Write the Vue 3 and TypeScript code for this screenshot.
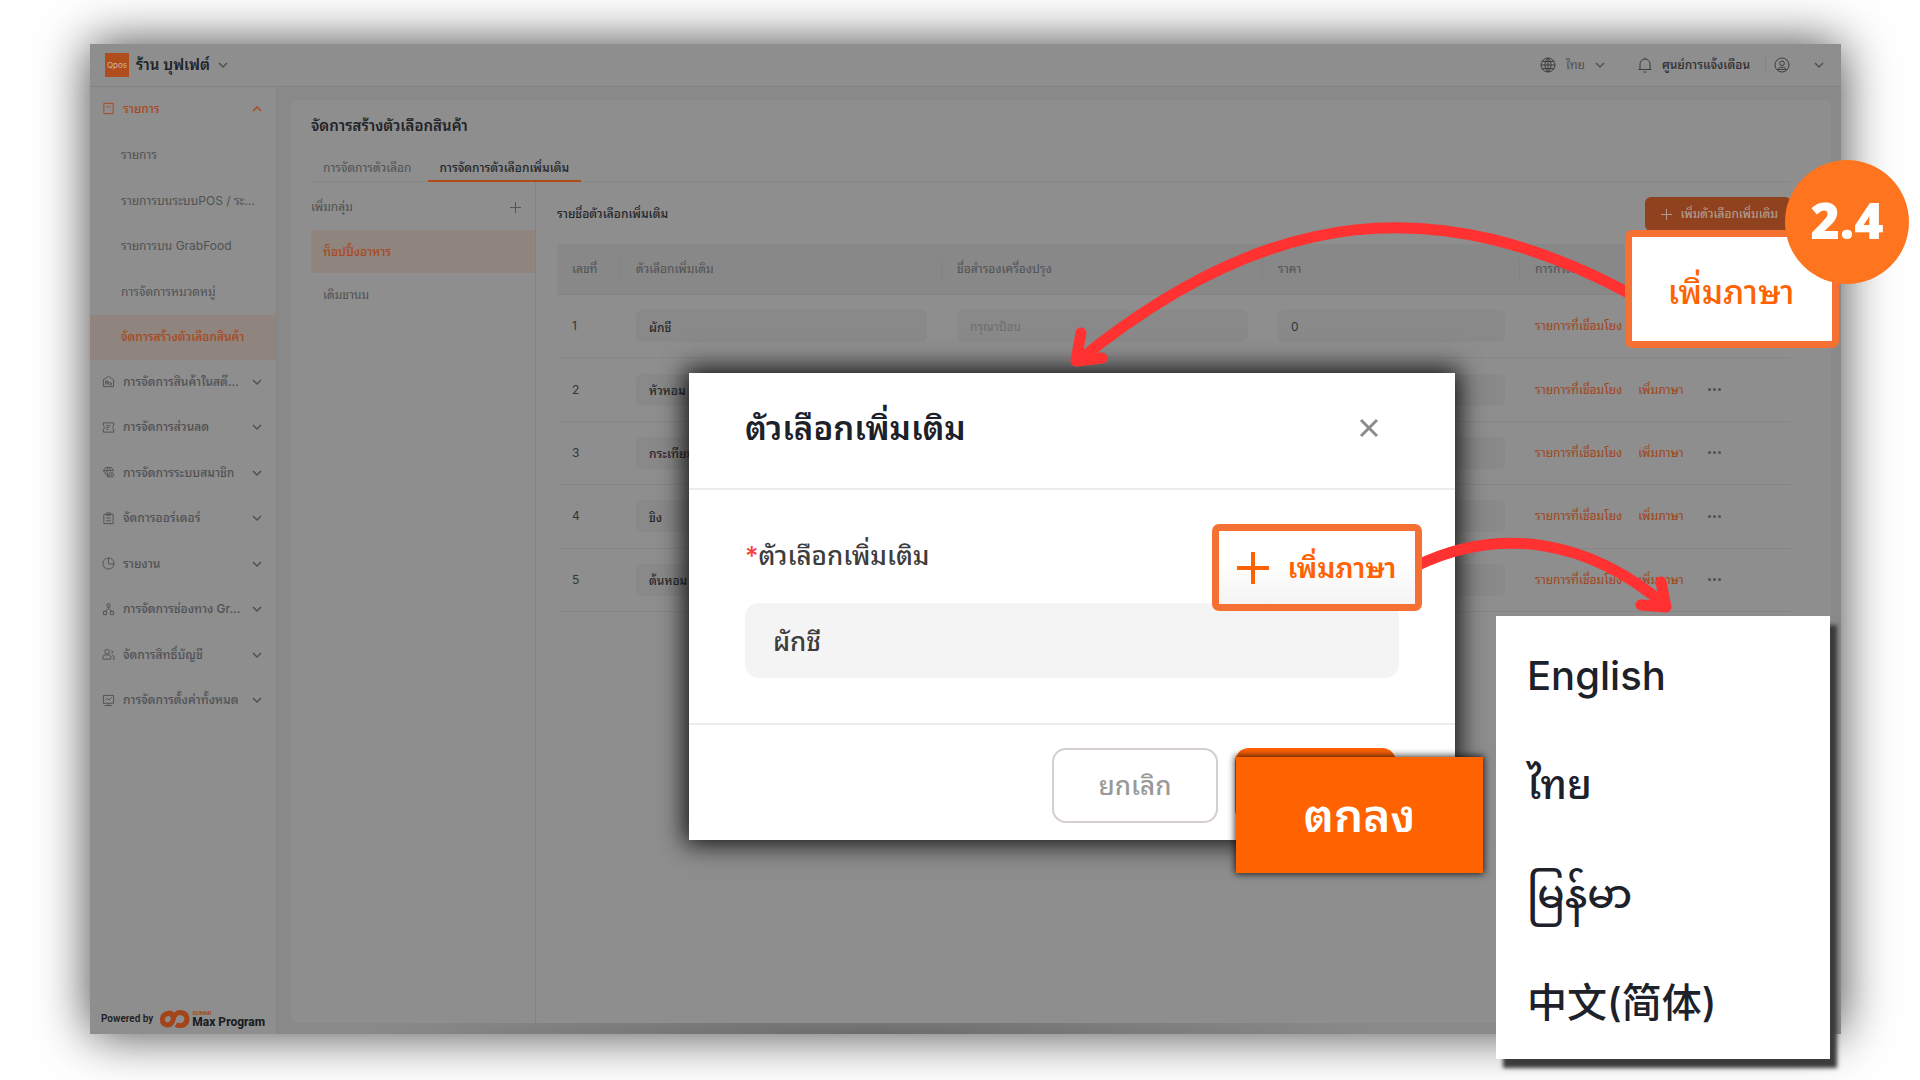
<script setup lang="ts">
import { ref } from 'vue'

interface MenuItem {
  label: string
  icon?: string
  kind: 'group' | 'child'
  open?: boolean
  active?: boolean
}

interface Topping {
  id: number
  name: string
  alias: string
  price: string
}

const menu: MenuItem[] = [
  { label: 'รายการ', icon: 'bag', kind: 'group', open: true },
  { label: 'รายการ', kind: 'child' },
  { label: 'รายการบนระบบPOS / ระ...', kind: 'child' },
  { label: 'รายการบน GrabFood', kind: 'child' },
  { label: 'การจัดการหมวดหมู่', kind: 'child' },
  { label: 'จัดการสร้างตัวเลือกสินค้า', kind: 'child', active: true },
  { label: 'การจัดการสินค้าในสต๊...', icon: 'stock', kind: 'group' },
  { label: 'การจัดการส่วนลด', icon: 'coupon', kind: 'group' },
  { label: 'การจัดการระบบสมาชิก', icon: 'member', kind: 'group' },
  { label: 'จัดการออร์เดอร์', icon: 'order', kind: 'group' },
  { label: 'รายงาน', icon: 'report', kind: 'group' },
  { label: 'การจัดการช่องทาง Gr...', icon: 'channel', kind: 'group' },
  { label: 'จัดการสิทธิ์บัญชี', icon: 'account', kind: 'group' },
  { label: 'การจัดการตั้งค่าทั้งหมด', icon: 'settings', kind: 'group' },
]

const icons: Record<string, string> = {
  bag: 'M2 1.5h10v11H2zM5 4c0 2.4 4 2.4 4 0',
  stock: 'M1.5 12.5V5L7 1.5 12.5 5v7.5zM4 10.5V6.5h2.5v4M4 8.5h6M8 10.5h2v-2',
  coupon: 'M1.5 2h11v3c-1.3 0-1.3 4 0 4v3h-11V9c1.3 0 1.3-4 0-4zM4.5 5h4.5M4.5 7h3M4.5 9h2',
  member: 'M7 12.5 1.5 5 4 1.5h6L12.5 5M1.5 5h11M5 5l2 7M5 5l1.5-3.5M9 5 8 1.5M10 7a2.5 2.5 0 1 1 0 5 2.5 2.5 0 0 1 0-5M10 8.5V10h1',
  order: 'M2 2.5h10v10H2zM5 1h4v2.5H5zM4.5 6.5h5M4.5 9.5h5',
  report: 'M7 1a6 6 0 1 1 0 12A6 6 0 0 1 7 1M7 1v6.5h6',
  channel: 'M5.5 1h3v3.5h-3zM7 4.5V6M3 9 7 6l4 3M1.5 9h3.5v3.5H1.5zM9 9h3.5v3.5H9z',
  account: 'M5.5 1.5a2.5 2.5 0 1 1 0 5 2.5 2.5 0 0 1 0-5M1 12V9.5C1 8 2.5 7.5 5.5 7.5S9.5 8 9.5 9.5V12zM10 3a1.5 1.5 0 1 1 0 3M11 8c1.5.3 2 1 2 2v2h-1.5',
  settings: 'M1.5 1.5h11V10h-11zM3.5 6.5 5.5 4.5 7.5 6.5 10.5 3.5M3 12.5h8M7 10v2.5',
}

const toppings = ref<Topping[]>([
  { id: 1, name: 'ผักชี', alias: '', price: '0' },
  { id: 2, name: 'หัวหอม', alias: '', price: '0' },
  { id: 3, name: 'กระเทียม', alias: '', price: '0' },
  { id: 4, name: 'ขิง', alias: '', price: '0' },
  { id: 5, name: 'ต้นหอม', alias: '', price: '0' },
])

const optionName = ref('ผักชี')

const languages = [
  { label: 'English', lang: 'en' },
  { label: 'ไทย', lang: 'th' },
  { label: 'မြန်မာ', lang: 'my' },
  { label: '中文(简体)', lang: 'zh-CN' },
]
</script>

<template>
  <main class="stage">
    <div class="frame">
      <header class="topbar">
        <button class="shop" type="button">
          <span class="shop-logo">Qpos</span>
          <span class="shop-name">ร้าน บุฟเฟต์</span>
          <svg class="chev" viewBox="0 0 10 10"><path d="M1 3l4 4 4-4" /></svg>
        </button>
        <div class="tools">
          <button class="tool lang" type="button">
            <svg class="tool-icon" viewBox="0 0 16 16"><path d="M8 1a7 7 0 1 1 0 14A7 7 0 0 1 8 1M8 1c-4 3.5-4 10.5 0 14M8 1c4 3.5 4 10.5 0 14M8 1v14M1 8h14M2 4.5h12M2 11.5h12" /></svg>
            <span>ไทย</span>
            <svg class="chev" viewBox="0 0 10 10"><path d="M1 3l4 4 4-4" /></svg>
          </button>
          <button class="tool notice" type="button">
            <svg class="tool-icon" viewBox="0 0 16 16"><path d="M3 12.5V7a5 5 0 0 1 10 0v5.5M1.5 12.5h13M6.5 15h3M8 2V.5" /></svg>
            <span>ศูนย์การแจ้งเตือน</span>
          </button>
          <button class="tool user" type="button" aria-label="บัญชี">
            <svg class="tool-icon" viewBox="0 0 16 16"><path d="M8 1a7 7 0 1 1 0 14A7 7 0 0 1 8 1M8 4a2.3 2.3 0 1 1 0 4.600A2.3 2.3 0 0 1 8 4M4 12.5c0-3 8-3 8 0z" /></svg>
            <svg class="chev" viewBox="0 0 10 10"><path d="M1 3l4 4 4-4" /></svg>
          </button>
        </div>
      </header>

      <div class="body">
        <aside class="sidebar">
          <nav>
            <ul class="menu">
              <li v-for="(item, i) in menu" :key="i">
                <a href="#" class="menu-item" :class="[item.kind, { open: item.open, active: item.active }]">
                  <svg v-if="item.icon" class="menu-icon" viewBox="0 0 14 14"><path :d="icons[item.icon]" /></svg>
                  <span class="menu-label">{{ item.label }}</span>
                  <svg v-if="item.kind === 'group'" class="chev" viewBox="0 0 10 10">
                    <path :d="item.open ? 'M1 7l4-4 4 4' : 'M1 3l4 4 4-4'" />
                  </svg>
                </a>
              </li>
            </ul>
          </nav>
          <div class="powered">
            <span>Powered by</span>
            <svg class="max-logo" viewBox="0 0 30 18">
              <path d="M12 7.500C13 3 10 2.500 8 3.500 4 4 2.500 7 2.500 10c0 5 6 6.500 9 3C14 10 12.500 7.500 15.500 4.500 19 1 27 2.500 27 9s-7 8-11 5.500" />
            </svg>
            <span class="max-name"><small>SUNMI</small><b>Max Program</b></span>
          </div>
        </aside>

        <section class="content">
          <div class="card">
            <h1>จัดการสร้างตัวเลือกสินค้า</h1>
            <div class="tabs">
              <button type="button">การจัดการตัวเลือก</button>
              <button type="button" class="on">การจัดการตัวเลือกเพิ่มเติม</button>
            </div>
            <div class="split">
              <div class="groups">
                <div class="groups-head">
                  <span>เพิ่มกลุ่ม</span>
                  <button type="button" aria-label="เพิ่มกลุ่ม">
                    <svg viewBox="0 0 12 12"><path d="M6 0v12M0 6h12" /></svg>
                  </button>
                </div>
                <a href="#" class="group on">ท็อปปิ้งอาหาร</a>
                <a href="#" class="group">เติมชานม</a>
              </div>
              <div class="options">
                <div class="options-head">
                  <h2>รายชื่อตัวเลือกเพิ่มเติม</h2>
                  <button type="button" class="add-option">
                    <svg viewBox="0 0 12 12"><path d="M6 0v12M0 6h12" /></svg>
                    <span>เพิ่มตัวเลือกเพิ่มเติม</span>
                  </button>
                </div>
                <table>
                  <colgroup>
                    <col class="c-no" /><col class="c-name" /><col class="c-name" /><col class="c-price" /><col />
                  </colgroup>
                  <thead>
                    <tr>
                      <th>เลขที่</th>
                      <th>ตัวเลือกเพิ่มเติม</th>
                      <th>ชื่อสำรองเครื่องปรุง</th>
                      <th>ราคา</th>
                      <th>การกระทำ</th>
                    </tr>
                  </thead>
                  <tbody>
                    <tr v-for="row in toppings" :key="row.id">
                      <td>{{ row.id }}</td>
                      <td><input v-model="row.name" class="strong" type="text" aria-label="ตัวเลือกเพิ่มเติม" /></td>
                      <td><input v-model="row.alias" type="text" placeholder="กรุณาป้อน" aria-label="ชื่อสำรองเครื่องปรุง" /></td>
                      <td><input v-model="row.price" type="text" aria-label="ราคา" /></td>
                      <td>
                        <div class="actions">
                          <a href="#">รายการที่เชื่อมโยง</a>
                          <a href="#">เพิ่มภาษา</a>
                          <button type="button" aria-label="เพิ่มเติม"><i></i><i></i><i></i></button>
                        </div>
                      </td>
                    </tr>
                  </tbody>
                </table>
              </div>
            </div>
          </div>
        </section>
      </div>
    </div>

    <div class="dialog" role="dialog" aria-labelledby="dialog-title">
      <div class="dialog-head">
        <h2 id="dialog-title">ตัวเลือกเพิ่มเติม</h2>
        <button type="button" class="close" aria-label="ปิด">
          <svg viewBox="0 0 20 20"><path d="M2 2l16 16M18 2L2 18" /></svg>
        </button>
      </div>
      <div class="dialog-body">
        <label for="option-name"><em>*</em>ตัวเลือกเพิ่มเติม</label>
        <input id="option-name" v-model="optionName" type="text" />
      </div>
      <div class="dialog-foot">
        <button type="button" class="cancel">ยกเลิก</button>
        <span class="ok-back"></span>
      </div>
    </div>

    <svg class="arrows" viewBox="0 0 1920 1080">
      <path d="M1634 296C1440 190 1270 204 1078 361M1081 333L1076 361L1102 358" />
      <path d="M1416 566C1500 525 1590 540 1666 606M1661 582L1666 607L1641 605" />
    </svg>

    <button type="button" class="callout add-lang">
      <svg viewBox="0 0 32 32"><path d="M16 0v32M0 16h32" /></svg>
      <span>เพิ่มภาษา</span>
    </button>
    <button type="button" class="callout row-lang">เพิ่มภาษา</button>
    <div class="step">2.4</div>
    <button type="button" class="confirm">ตกลง</button>

    <ul class="languages">
      <li v-for="l in languages" :key="l.lang">
        <button type="button" :lang="l.lang">{{ l.label }}</button>
      </li>
    </ul>
  </main>
</template>

<style>
body {
  background: #fff;
}
</style>

<style scoped>
* {
  box-sizing: border-box;
}
.stage {
  position: relative;
  display: flex;
  min-height: 100vh;
  padding: 44px 79px 46px 90px;
  overflow: hidden;
  font-family: Inter, "Noto Sans Thai Looped", "Noto Sans Myanmar", "Noto Sans", "Noto Sans CJK SC", sans-serif;
  font-size: 12px;
  line-height: 20px;
  color: #505153;
}
button,
input {
  font: inherit;
  color: inherit;
}
button {
  padding: 0;
  border: 0;
  background: none;
}
a {
  color: inherit;
  text-decoration: none;
}
ul {
  margin: 0;
  padding: 0;
  list-style: none;
}
h1,
h2 {
  margin: 0;
}
svg {
  flex: none;
  fill: none;
  stroke: currentColor;
}
.frame {
  flex: 1;
  display: flex;
  flex-direction: column;
  min-width: 0;
  background: #8e8e8e;
  box-shadow: 0 0 48px rgba(0, 0, 0, 0.75);
}
.topbar {
  display: flex;
  align-items: center;
  justify-content: space-between;
  height: 43px;
  padding: 0 17px 0 15px;
  border-bottom: 1px solid #828282;
}
.shop,
.tool {
  display: flex;
  align-items: center;
}
.shop-logo {
  width: 24px;
  height: 24px;
  margin-right: 7px;
  background: #b04d1c;
  color: #c9b3a7;
  font-size: 8px;
  line-height: 24px;
  text-align: center;
}
.shop-name {
  margin-right: 8px;
  color: #202227;
  font-size: 15px;
  font-weight: 600;
}
.chev {
  width: 10px;
  height: 10px;
  stroke-width: 1.5;
}
.tool-icon {
  width: 16px;
  height: 16px;
  stroke: #3c3d3f;
}
.lang {
  gap: 10px;
  margin-right: 32px;
}
.notice {
  gap: 9px;
  padding-right: 15px;
  border-right: 1px solid #868686;
  color: #2c2d30;
  font-weight: 500;
}
.user {
  gap: 24px;
  padding-left: 8px;
}
.tools {
  display: flex;
  align-items: center;
}
.body {
  flex: 1;
  display: flex;
}
.sidebar {
  flex: none;
  display: flex;
  flex-direction: column;
  justify-content: space-between;
  width: 187px;
  border-right: 1px solid #848484;
}
.menu {
  display: grid;
  grid-auto-rows: 1fr;
  height: 637px;
}
.menu li {
  display: flex;
}
.menu-item {
  flex: 1;
  display: flex;
  align-items: center;
  min-width: 0;
  padding: 0 14px 0 10px;
  white-space: nowrap;
}
.menu-item.child {
  padding-left: 31px;
}
.menu-item.group {
  font-weight: 500;
}
.menu-item.open {
  color: #a9481c;
}
.menu-item.active {
  background: #8f847e;
  color: #a9481c;
  font-weight: 500;
}
.menu-icon {
  width: 13px;
  height: 13px;
  margin-right: 8px;
}
.menu-label {
  flex: 1;
}
.powered {
  display: flex;
  align-items: center;
  height: 30px;
  padding-left: 11px;
  color: #1b1d24;
  font-family: Roboto, sans-serif;
  font-size: 10px;
  font-weight: 600;
  white-space: nowrap;
}
.max-logo {
  width: 30px;
  height: 18px;
  margin: 0 2px 0 7px;
  stroke: #a4441a;
  stroke-width: 5;
}
.max-name {
  display: flex;
  flex-direction: column;
}
.max-name small {
  color: #a4441a;
  font-size: 6px;
  line-height: 6px;
}
.max-name b {
  font-size: 12px;
  line-height: 13px;
  font-weight: 800;
}
.content {
  flex: 1;
  min-width: 0;
  display: flex;
  padding: 13px 10px 11px 14px;
  background: radial-gradient(ellipse 500px 32px at 38% 100%, #6c6c6c, #898989);
}
.card {
  flex: 1;
  min-width: 0;
  display: flex;
  flex-direction: column;
  padding: 14px 40px 0 20px;
  border-radius: 6px;
  background: #8e8e8e;
}
h1 {
  color: #212329;
  font-size: 15px;
  line-height: 24px;
  font-weight: 600;
}
.tabs {
  display: flex;
  gap: 4px;
  height: 44px;
  border-bottom: 1px solid #868686;
}
.tabs button {
  height: 44px;
  padding: 20px 12px 8px;
  border-bottom: 2px solid transparent;
}
.tabs button.on {
  border-color: #b0491b;
  color: #232529;
  font-weight: 500;
}
.split {
  flex: 1;
  display: flex;
}
.groups {
  flex: none;
  width: 225px;
  border-right: 1px solid #828282;
}
.groups-head {
  display: flex;
  align-items: center;
  justify-content: space-between;
  height: 48px;
  padding: 2px 14px 0 0;
}
.groups-head svg,
.add-option svg {
  display: block;
  width: 11px;
  height: 11px;
}
.group {
  display: flex;
  align-items: center;
  height: 43px;
  padding-left: 12px;
}
.group.on {
  background: #8f847e;
  color: #a9481c;
  font-weight: 500;
}
.options {
  flex: 1;
  min-width: 0;
  padding-left: 21px;
}
.options-head {
  display: flex;
  align-items: center;
  justify-content: space-between;
  height: 62px;
  padding-top: 2px;
}
.options-head h2 {
  color: #232529;
  font-size: 12px;
  font-weight: 500;
}
.add-option {
  display: flex;
  align-items: center;
  gap: 8px;
  height: 34px;
  padding: 0 13px 0 16px;
  border-radius: 6px;
  background: #8f421d;
  color: #b5a49b;
}
table {
  width: 100%;
  height: 368px;
  border-collapse: separate;
  border-spacing: 0;
  table-layout: fixed;
}
.c-no {
  width: 64px;
}
.c-name {
  width: 321px;
}
.c-price {
  width: 257px;
}
th {
  position: relative;
  height: 51px;
  padding: 0 0 0 15px;
  border-bottom: 1px solid #848484;
  background: #888;
  font-weight: 400;
  text-align: left;
}
th:not(:last-child)::after {
  content: "";
  position: absolute;
  top: 14px;
  right: 0;
  width: 1px;
  height: 22px;
  background: #838383;
}
td {
  height: 63px;
  padding: 0 15px;
  border-bottom: 1px solid #868686;
  color: #333436;
}
td input {
  display: block;
  width: 100%;
  height: 32px;
  padding: 0 13px;
  border: 0;
  border-radius: 6px;
  background: #898989;
}
td input.strong {
  font-weight: 500;
  color: #26272a;
}
td input::placeholder {
  color: #6d6d6d;
}
.actions {
  display: flex;
  align-items: center;
  gap: 16px;
  color: #a0441b;
  white-space: nowrap;
}
.actions button {
  display: flex;
  gap: 2px;
  margin-left: 8px;
}
.actions i {
  width: 3px;
  height: 3px;
  border-radius: 50%;
  background: #505153;
}
.dialog {
  position: absolute;
  top: 373px;
  left: 689px;
  width: 766px;
  background: #fff;
  box-shadow: 0 0 24px 4px rgba(0, 0, 0, 0.9);
}
.dialog-head {
  display: flex;
  align-items: center;
  justify-content: space-between;
  height: 117px;
  padding: 0 76px 6px 56px;
  border-bottom: 2px solid #ececec;
}
.dialog-head h2 {
  color: #1d2129;
  font-size: 33px;
  line-height: 48px;
  font-weight: 600;
}
.close {
  color: #8c8c8c;
}
.close svg {
  display: block;
  width: 20px;
  height: 20px;
  stroke-width: 3;
}
.dialog-body {
  height: 235px;
  padding: 46px 56px 0;
  border-bottom: 2px solid #ececec;
  color: #3d3d3d;
  font-size: 26px;
  font-weight: 500;
}
.dialog-body label {
  display: block;
  height: 67px;
  line-height: 40px;
}
.dialog-body em {
  color: #f53f3f;
  font-style: normal;
}
.dialog-body input {
  display: block;
  width: 100%;
  height: 75px;
  padding: 0 28px 4px;
  border: 0;
  border-radius: 14px;
  background: #f4f4f4;
}
.dialog-foot {
  display: flex;
  justify-content: flex-end;
  gap: 17px;
  height: 115px;
  padding: 23px 59px 0 0;
}
.cancel {
  width: 166px;
  height: 75px;
  border: 2px solid #d4cfcc;
  border-radius: 14px;
  color: #999;
  font-size: 26px;
  font-weight: 500;
}
.ok-back {
  width: 161px;
  height: 75px;
  border-radius: 14px;
  background: #ff6200;
}
.arrows {
  position: absolute;
  top: 0;
  left: 0;
  width: 1920px;
  height: 1080px;
  stroke: #ff3131;
  stroke-width: 11;
  stroke-linecap: round;
  stroke-linejoin: round;
  pointer-events: none;
}
.callout {
  position: absolute;
  display: flex;
  align-items: center;
  justify-content: center;
  border: 7px solid #f47133;
  border-radius: 7px;
  background: #fff;
  color: #ff6200;
}
.add-lang {
  top: 524px;
  left: 1212px;
  width: 210px;
  height: 87px;
  gap: 18px;
  background: linear-gradient(#fff 40%, #f4f4f4);
  font-size: 28px;
  font-weight: 600;
}
.add-lang svg {
  width: 32px;
  height: 32px;
  stroke-width: 4;
}
.row-lang {
  top: 230px;
  left: 1625px;
  width: 214px;
  height: 118px;
  padding: 6px 2px 0 0;
  font-size: 33px;
  font-weight: 500;
}
.step {
  position: absolute;
  top: 160px;
  left: 1785px;
  width: 124px;
  height: 124px;
  border-radius: 50%;
  background: #ff751f;
  color: #fff;
  font-family: "Open Sans", sans-serif;
  font-size: 50px;
  font-weight: 800;
  line-height: 120px;
  text-align: center;
}
.confirm {
  position: absolute;
  top: 757px;
  left: 1236px;
  width: 247px;
  height: 116px;
  background: #ff6200;
  box-shadow: 0 0 7px 1px rgba(0, 0, 0, 0.8);
  color: #fff;
  font-size: 46px;
  font-weight: 600;
}
.languages {
  position: absolute;
  top: 616px;
  left: 1496px;
  width: 334px;
  padding: 5px 0 0 31px;
  height: 443px;
  background: #fff;
  box-shadow: 7px 9px 4px #3a3b3d;
  color: #1d2129;
  font-size: 40px;
}
.languages li {
  display: flex;
  align-items: center;
  height: 109px;
}
.languages button {
  font-weight: 500;
  line-height: 60px;
}
</style>
